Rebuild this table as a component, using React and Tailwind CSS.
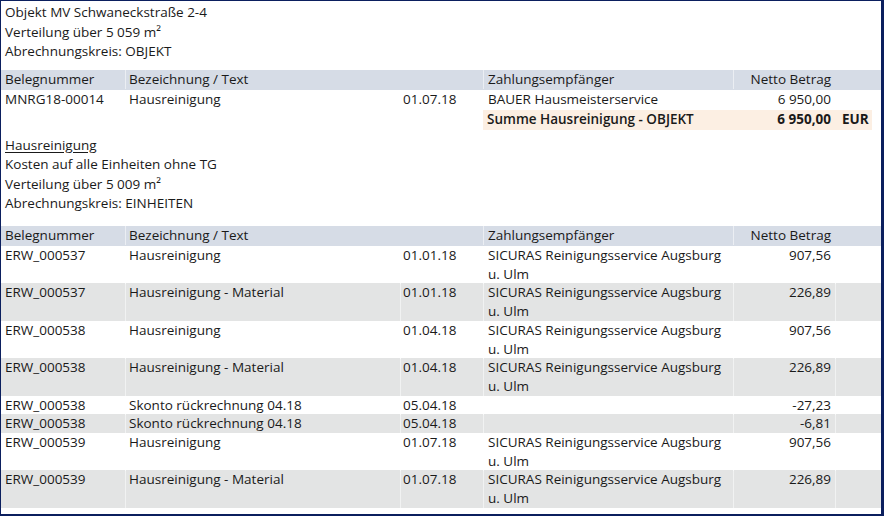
import React from "react";

const GRID = "grid grid-cols-[124px_275px_83px_250px_102px_37px]";

function Row({ cells, bg = "", h = "h-[19px]", bold = false }) {
  const [a, b, c, d, e, f] = cells;
  return (
    <div className={`${GRID} ${bg} ${h} ${bold ? "font-semibold" : ""}`}>
      <div className="pl-[4px] whitespace-nowrap">{a}</div>
      <div className="pl-[3px] border-l border-white/50 whitespace-nowrap">{b}</div>
      <div className="pl-[2px] border-l border-white/50 whitespace-nowrap">{c}</div>
      <div className="pl-[4px] border-l border-white/50">{d}</div>
      <div className="pr-[4px] text-right border-l border-white/50 whitespace-nowrap">{e}</div>
      <div className="pl-[6px] border-l border-white/50 whitespace-nowrap">{f}</div>
    </div>
  );
}

function Header() {
  return (
    <Row
      bg="bg-[#d6dce6]"
      h="h-[20px] items-center"
      cells={["Belegnummer", "Bezeichnung / Text", "", "Zahlungsempfänger", "Netto Betrag", ""]}
    />
  );
}

const SIC = (
  <>
    SICURAS Reinigungsservice Augsburg
    <br />
    u. Ulm
  </>
);

const rows2 = [
  ["ERW_000537", "Hausreinigung", "01.01.18", SIC, "907,56", 2],
  ["ERW_000537", "Hausreinigung - Material", "01.01.18", SIC, "226,89", 2],
  ["ERW_000538", "Hausreinigung", "01.04.18", SIC, "907,56", 2],
  ["ERW_000538", "Hausreinigung - Material", "01.04.18", SIC, "226,89", 2],
  ["ERW_000538", "Skonto rückrechnung 04.18", "05.04.18", "", "-27,23", 1],
  ["ERW_000538", "Skonto rückrechnung 04.18", "05.04.18", "", "-6,81", 1],
  ["ERW_000539", "Hausreinigung", "01.07.18", SIC, "907,56", 2],
  ["ERW_000539", "Hausreinigung - Material", "01.07.18", SIC, "226,89", 2],
];

export default function App() {
  return (
    <div
      className="w-[884px] h-[516px] bg-white border-t border-l border-r-[3px] border-b-[2px] border-[#0b1f5e] text-[#1a1a1a] text-[13.5px] leading-[19px] overflow-hidden"
      style={{ fontFamily: '"Open Sans", "Noto Sans", sans-serif' }}
    >
      <div className="pl-[4px] pt-[2px] leading-[19.5px]">
        <div>Objekt MV Schwaneckstraße 2-4</div>
        <div>Verteilung über 5 059 m²</div>
        <div>Abrechnungskreis: OBJEKT</div>
      </div>
      <div className="mt-[8px]">
        <Header />
        <Row cells={["MNRG18-00014", "Hausreinigung", "01.07.18", "BAUER Hausmeisterservice", "6 950,00", ""]} h="h-[20px]" />
        <div className={`${GRID} h-[20px]`}>
          <div className="col-span-3" />
          <div className="col-span-3 bg-[#fcefe3] flex">
            <div className="w-[250px] pl-[4px] font-semibold whitespace-nowrap">Summe Hausreinigung - OBJEKT</div>
            <div className="w-[102px] pr-[4px] text-right font-bold">6 950,00</div>
            <div className="w-[37px] pl-[7px] font-bold">EUR</div>
          </div>
        </div>
      </div>
      <div className="pl-[4px] mt-[6px] leading-[19.5px]">
        <div className="underline underline-offset-2">Hausreinigung</div>
        <div>Kosten auf alle Einheiten ohne TG</div>
        <div>Verteilung über 5 009 m²</div>
        <div>Abrechnungskreis: EINHEITEN</div>
      </div>
      <div className="mt-[12px]">
        <Header />
        {rows2.map((r, i) => (
          <Row
            key={i}
            cells={[r[0], r[1], r[2], r[3], r[4], ""]}
            bg={i % 2 === 1 ? "bg-[#e3e4e4]" : ""}
            h={r[5] === 2 ? "h-[37.5px]" : "h-[18.5px]"}
          />
        ))}
      </div>
    </div>
  );
}
